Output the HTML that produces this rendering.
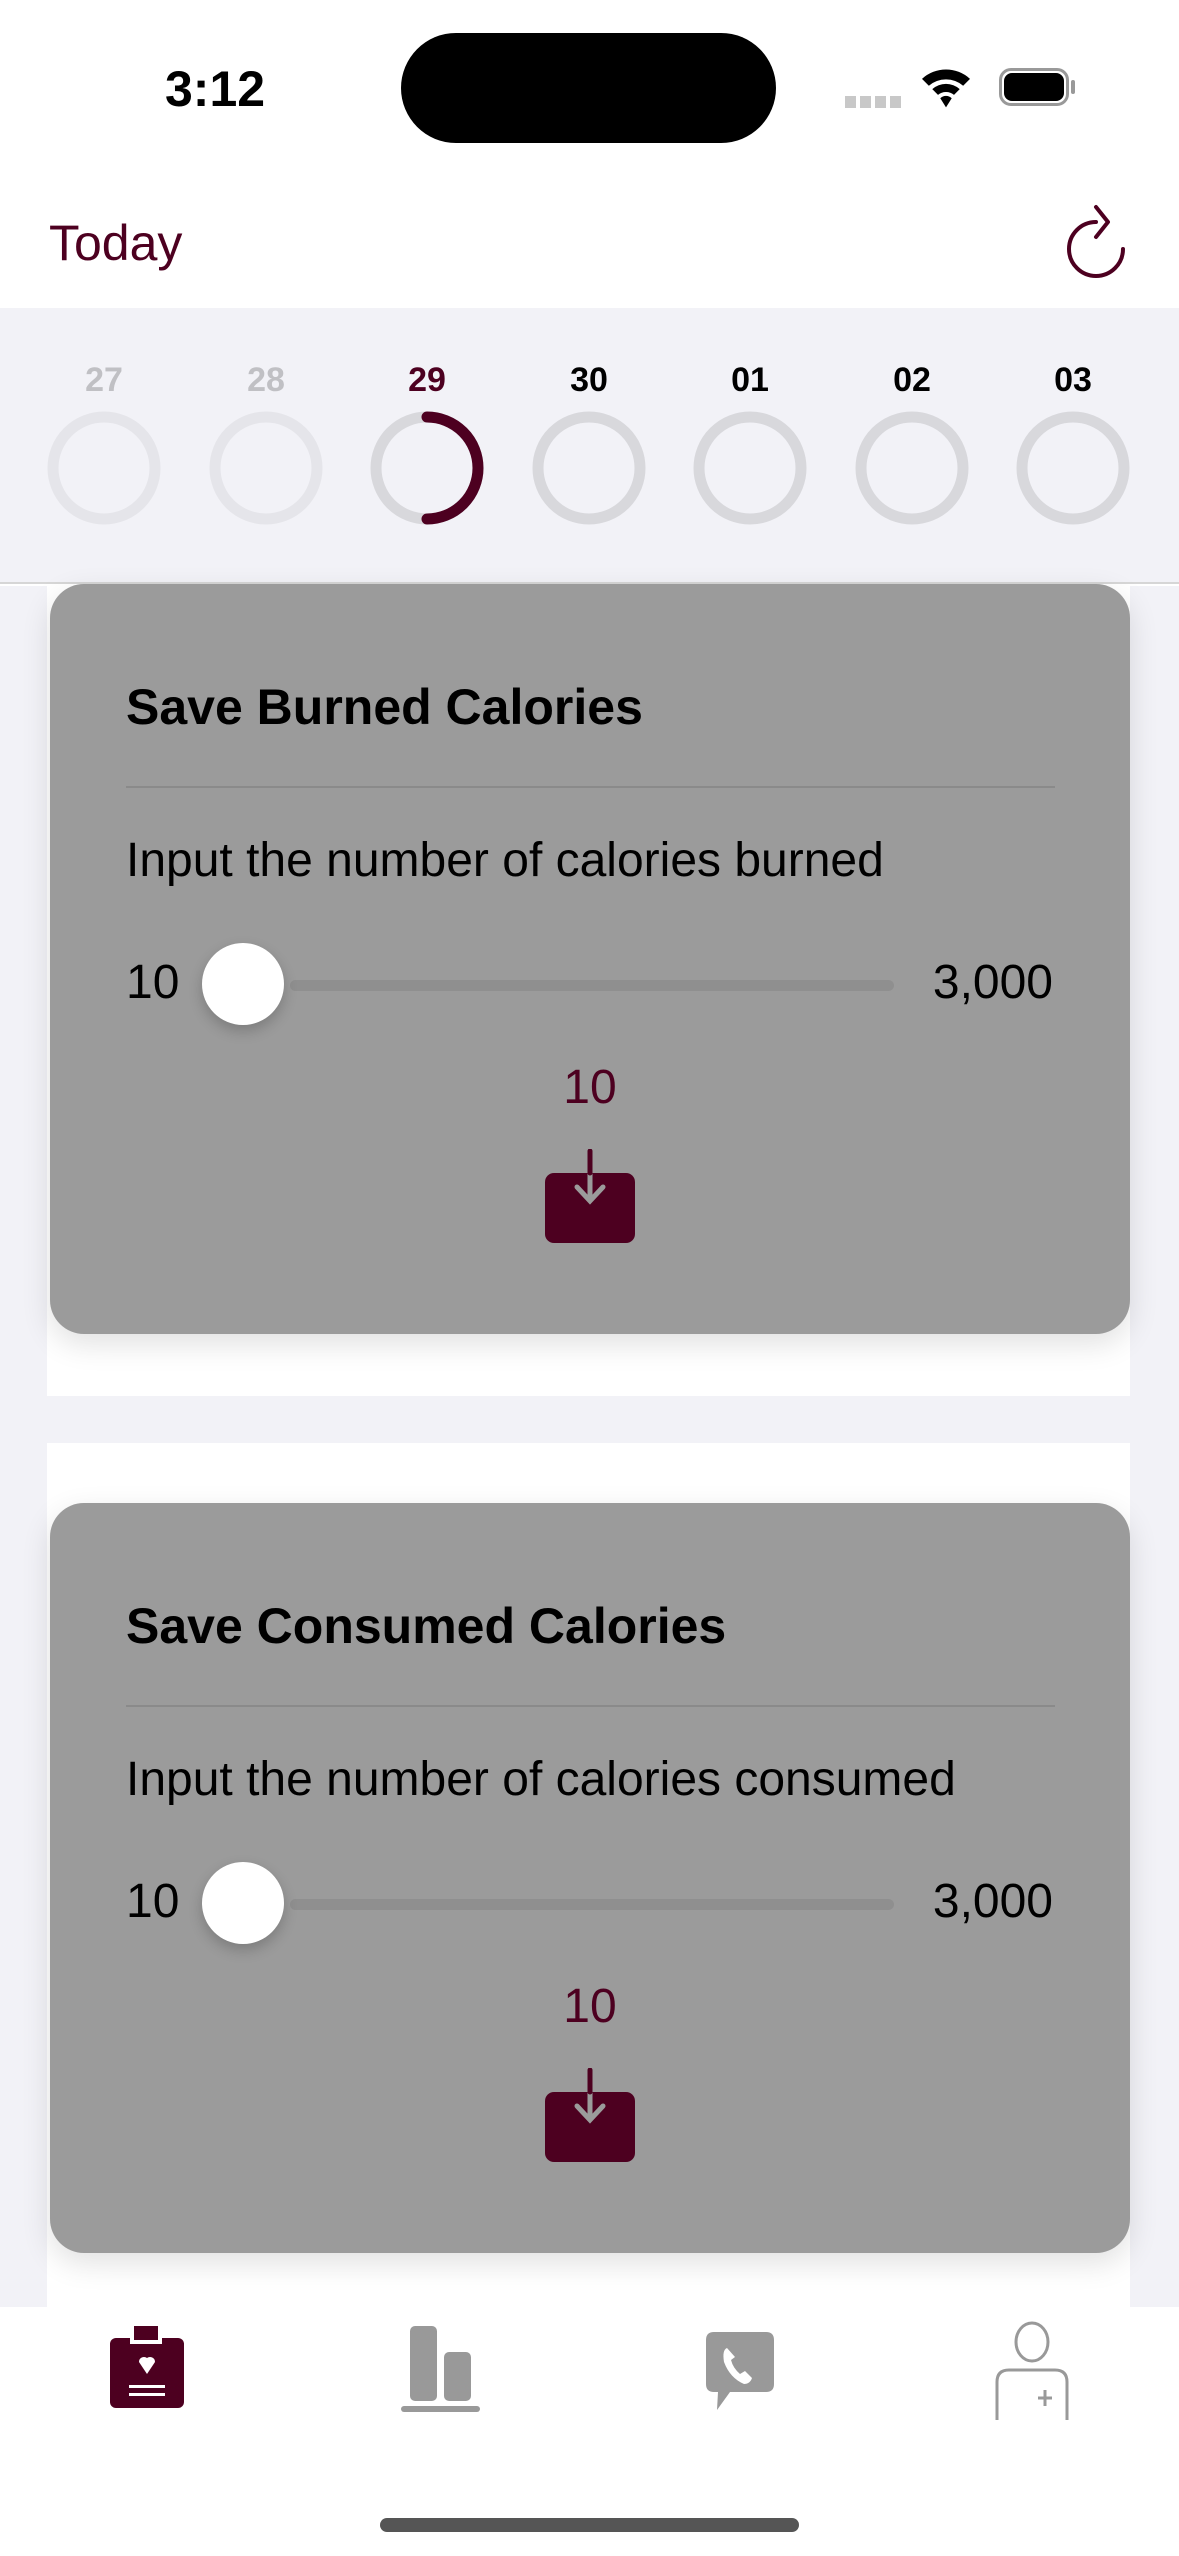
<!DOCTYPE html>
<html><head><meta charset="utf-8"><style>
*{margin:0;padding:0;box-sizing:border-box}
body{width:1179px;height:2556px;background:#fff;font-family:"Liberation Sans",sans-serif;position:relative;overflow:hidden}
.a{position:absolute}
.card{position:absolute;left:50px;width:1080px;height:750px;background:#9b9b9b;border-radius:34px;box-shadow:0 10px 30px rgba(0,0,0,0.12)}
.t{position:absolute;left:76px;font-weight:bold;font-size:50px;color:#000;white-space:nowrap}
.div{position:absolute;left:76px;width:929px;top:202px;height:2px;background:#8a8a8a}
.s{position:absolute;left:76px;font-size:48px;color:#000;white-space:nowrap}
.track{position:absolute;left:240px;width:604px;top:396px;height:11px;border-radius:6px;background:#8f8f8f}
.thumb{position:absolute;left:152px;top:359px;width:82px;height:82px;border-radius:50%;background:#fff;box-shadow:0 6px 14px rgba(0,0,0,0.2)}
.v{position:absolute;left:0;width:1080px;text-align:center;font-size:48px;color:#4d0020}
</style></head><body>
<div class="a" style="left:165px;top:60px;font-size:50px;font-weight:bold;">3:12</div>
<div class="a" style="left:401px;top:33px;width:375px;height:110px;border-radius:55px;background:#000"></div>
<div class="a" style="left:845px;top:96px;width:58px;height:12px;background:repeating-linear-gradient(90deg,#c8c8c8 0 11px,transparent 11px 15px)"></div>
<svg class="a" style="left:920px;top:64px" width="52" height="48" viewBox="0 0 44 42"><path d="M1 13 A31 31 0 0 1 43 13 L37 19 A23 23 0 0 0 7 19Z M10 22 A18 18 0 0 1 34 22 L29 27 A11 11 0 0 0 15 27Z M17 30 A7 7 0 0 1 27 30 L22 38Z" fill="#000"/></svg>
<div class="a" style="left:999px;top:68px;width:70px;height:38px;border:3px solid #999;border-radius:12px"></div>
<div class="a" style="left:1004px;top:73px;width:60px;height:28px;background:#000;border-radius:8px"></div>
<div class="a" style="left:1071px;top:80px;width:4px;height:14px;background:#999;border-radius:2px"></div>

<div class="a" style="left:49px;top:214px;font-size:50px;color:#4d0020">Today</div>
<svg class="a" style="left:1060px;top:200px" width="70" height="80" viewBox="0 0 70 80"><path d="M36 22 A27 27 0 1 0 63 49" fill="none" stroke="#4d0020" stroke-width="4" stroke-linecap="round"/><path d="M36 7 L48 22 L36 37" fill="none" stroke="#4d0020" stroke-width="4" stroke-linecap="round" stroke-linejoin="round"/></svg>

<div class="a" style="left:0;top:308px;width:1179px;height:276px;background:#f2f2f7;border-bottom:2px solid #d6d6d6"></div>
<svg class="a" style="left:0;top:340px" width="1179" height="200">
<g font-family="Liberation Sans" font-weight="bold" font-size="34" text-anchor="middle">
<text x="104" y="51" fill="#c0c0c4">27</text><text x="266" y="51" fill="#c0c0c4">28</text><text x="427" y="51" fill="#4d0020">29</text><text x="589" y="51" fill="#000">30</text><text x="750" y="51" fill="#000">01</text><text x="912" y="51" fill="#000">02</text><text x="1073" y="51" fill="#000">03</text></g>
<g fill="none" stroke-width="11">
<circle cx="104" cy="128" r="51" stroke="#e5e5ea"/><circle cx="266" cy="128" r="51" stroke="#e5e5ea"/><circle cx="427" cy="128" r="51" stroke="#d8d8dc"/>
<path d="M427 77 A51 51 0 0 1 427 179" stroke="#4d0020" stroke-linecap="round"/>
<circle cx="589" cy="128" r="51" stroke="#d8d8dc"/><circle cx="750" cy="128" r="51" stroke="#d8d8dc"/><circle cx="912" cy="128" r="51" stroke="#d8d8dc"/><circle cx="1073" cy="128" r="51" stroke="#d8d8dc"/></g></svg>

<div class="a" style="left:0;top:586px;width:1179px;height:1721px;background:#f2f2f7"></div>
<div class="a" style="left:47px;top:586px;width:1083px;height:810px;background:#fff"></div>
<div class="a" style="left:47px;top:1443px;width:1083px;height:864px;background:#fff"></div>

<div class="card" style="top:584px">
<div class="t" style="top:94px">Save Burned Calories</div>
<div class="div"></div>
<div class="s" style="top:249px">Input the number of calories burned</div>
<div class="s" style="top:371px">10</div>
<div class="track"></div><div class="thumb"></div>
<div class="s" style="left:auto;right:77px;top:371px">3,000</div>
<div class="v" style="top:476px">10</div>
<svg class="a" style="left:494px;top:565px" width="92" height="96" viewBox="0 0 92 96"><rect x="1" y="24" width="90" height="70" rx="9" fill="#4d0020"/><path d="M46 2 V50 M33 38 L46 52 L59 38" fill="none" stroke="#9b9b9b" stroke-width="5" stroke-linecap="round"/><path d="M46 2 V24" stroke="#4d0020" stroke-width="5" stroke-linecap="round"/></svg>
</div>

<div class="card" style="top:1503px">
<div class="t" style="top:94px">Save Consumed Calories</div>
<div class="div"></div>
<div class="s" style="top:249px">Input the number of calories consumed</div>
<div class="s" style="top:371px">10</div>
<div class="track"></div><div class="thumb"></div>
<div class="s" style="left:auto;right:77px;top:371px">3,000</div>
<div class="v" style="top:476px">10</div>
<svg class="a" style="left:494px;top:565px" width="92" height="96" viewBox="0 0 92 96"><rect x="1" y="24" width="90" height="70" rx="9" fill="#4d0020"/><path d="M46 2 V50 M33 38 L46 52 L59 38" fill="none" stroke="#9b9b9b" stroke-width="5" stroke-linecap="round"/><path d="M46 2 V24" stroke="#4d0020" stroke-width="5" stroke-linecap="round"/></svg>
</div>

<div class="a" style="left:0;top:2307px;width:1179px;height:249px;background:#fff"></div>
<svg class="a" style="left:0;top:2320px" width="1179" height="100">
<rect x="110" y="18" width="74" height="70" rx="6" fill="#4d0020"/><rect x="130" y="10" width="32" height="14" fill="#fff"/><rect x="134" y="6" width="24" height="14" fill="#4d0020"/>
<path d="M147 54 L139 42 A5 5 0 0 1 147 38 A5 5 0 0 1 155 42Z" fill="#fff"/><rect x="129" y="65" width="36" height="3" fill="#fff"/><rect x="129" y="73" width="36" height="3" fill="#fff"/>
<rect x="410" y="6" width="27" height="75" rx="5" fill="#999"/><rect x="444" y="32" width="27" height="49" rx="5" fill="#999"/><rect x="401" y="86" width="79" height="6" rx="3" fill="#999"/>
<path d="M706 20 Q706 12 714 12 H766 Q774 12 774 20 V64 Q774 72 766 72 H730 L717 90 L718 72 H714 Q706 72 706 64Z" fill="#999"/>
<path d="M727 28 Q722 30 724 42 Q730 58 744 64 Q750 64 752 58 L745 51 L740 54 Q733 48 731 40 L735 37 Z" fill="#fff"/>
<ellipse cx="1032" cy="22" rx="16" ry="19" fill="none" stroke="#999" stroke-width="3"/>
<path d="M997 102 V62 Q997 50 1009 50 H1055 Q1067 50 1067 62 V102" fill="none" stroke="#999" stroke-width="3"/>
<path d="M1045 70 V86 M1038 78 H1052" stroke="#999" stroke-width="3"/>
</svg>
<div class="a" style="left:380px;top:2518px;width:419px;height:14px;border-radius:7px;background:#555"></div>
</body></html>
